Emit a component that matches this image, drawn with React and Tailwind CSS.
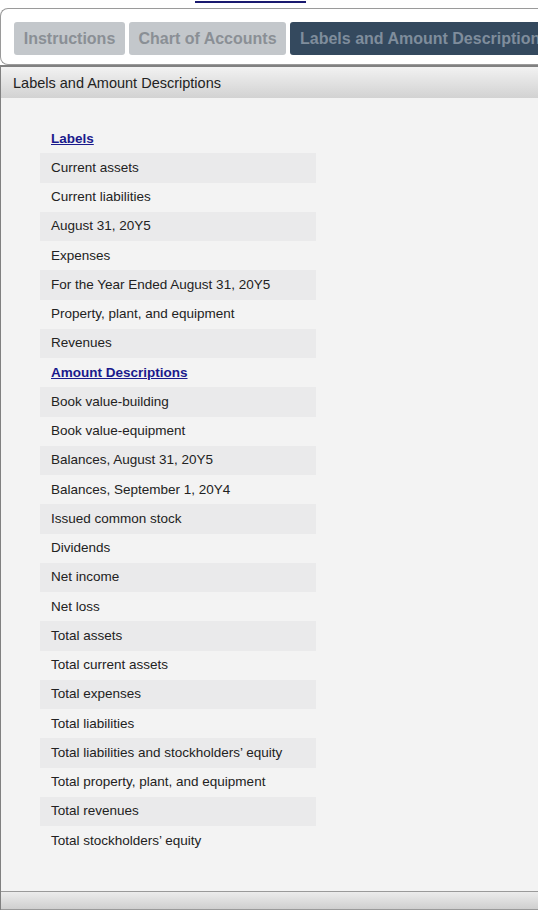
import React from 'react';

const labels = [
  'Current assets',
  'Current liabilities',
  'August 31, 20Y5',
  'Expenses',
  'For the Year Ended August 31, 20Y5',
  'Property, plant, and equipment',
  'Revenues',
];

const amounts = [
  'Book value-building',
  'Book value-equipment',
  'Balances, August 31, 20Y5',
  'Balances, September 1, 20Y4',
  'Issued common stock',
  'Dividends',
  'Net income',
  'Net loss',
  'Total assets',
  'Total current assets',
  'Total expenses',
  'Total liabilities',
  'Total liabilities and stockholders’ equity',
  'Total property, plant, and equipment',
  'Total revenues',
  'Total stockholders’ equity',
];

const Heading = ({ children }) => (
  <div className="h-[29.25px] flex items-center pl-[11px]">
    <a href="#" className="text-[13.5px] font-bold text-[#1a1a8c] underline">
      {children}
    </a>
  </div>
);

const Row = ({ text, shaded }) => (
  <div
    className={`h-[29.25px] flex items-center pl-[11px] text-[13.5px] text-[#222] ${
      shaded ? 'bg-[#eaeaeb]' : ''
    }`}
  >
    {text}
  </div>
);

export default function App() {
  return (
    <div className="w-[538px] h-[917px] overflow-hidden bg-white font-['Liberation_Sans',Arial,sans-serif]">
      {/* cut-off link at the very top */}
      <div className="h-[8px] pt-[1px]">
        <div className="ml-[195px] w-[111px] h-[2px] bg-[#1a1a70]" />
      </div>

      {/* tabs */}
      <div className="h-[57px] border border-r-0 border-[#9a9a9a] rounded-l-[8px] pl-[13px] pt-[13px] flex gap-[4px] whitespace-nowrap overflow-hidden">
        <div className="h-[33px] w-[111px] shrink-0 rounded-[3px] bg-[#c3c7cb] text-[#8a8f95] font-bold text-[16px] flex items-center justify-center">
          Instructions
        </div>
        <div className="h-[33px] w-[157px] shrink-0 rounded-[3px] bg-[#c3c7cb] text-[#8a8f95] font-bold text-[16px] flex items-center justify-center">
          Chart of Accounts
        </div>
        <div className="h-[33px] w-[260px] shrink-0 overflow-hidden rounded-[3px] bg-[#34495e] text-[#7f8d9c] font-bold text-[16px] flex items-center pl-[10px]">
          Labels and Amount Descriptions
        </div>
      </div>

      {/* panel */}
      <div className="border-l border-t-2 border-[#808080] bg-[#f3f3f3]">
        <div className="h-[31px] flex items-center pl-[12px] pt-[2px] text-[14.5px] text-[#222] bg-gradient-to-b from-[#f2f2f2] to-[#d2d2d2]">
          Labels and Amount Descriptions
        </div>
        <div className="h-[793px] pt-[26px] pl-[39px]">
          <div className="w-[276px]">
            <Heading>Labels</Heading>
            {labels.map((t, i) => (
              <Row key={t} text={t} shaded={i % 2 === 0} />
            ))}
            <Heading>Amount Descriptions</Heading>
            {amounts.map((t, i) => (
              <Row key={t} text={t} shaded={i % 2 === 0} />
            ))}
          </div>
        </div>
        <div className="h-[19px] border-t border-b border-[#9a9a9a] bg-gradient-to-b from-[#ececec] to-[#cfcfcf]" />
      </div>
    </div>
  );
}
